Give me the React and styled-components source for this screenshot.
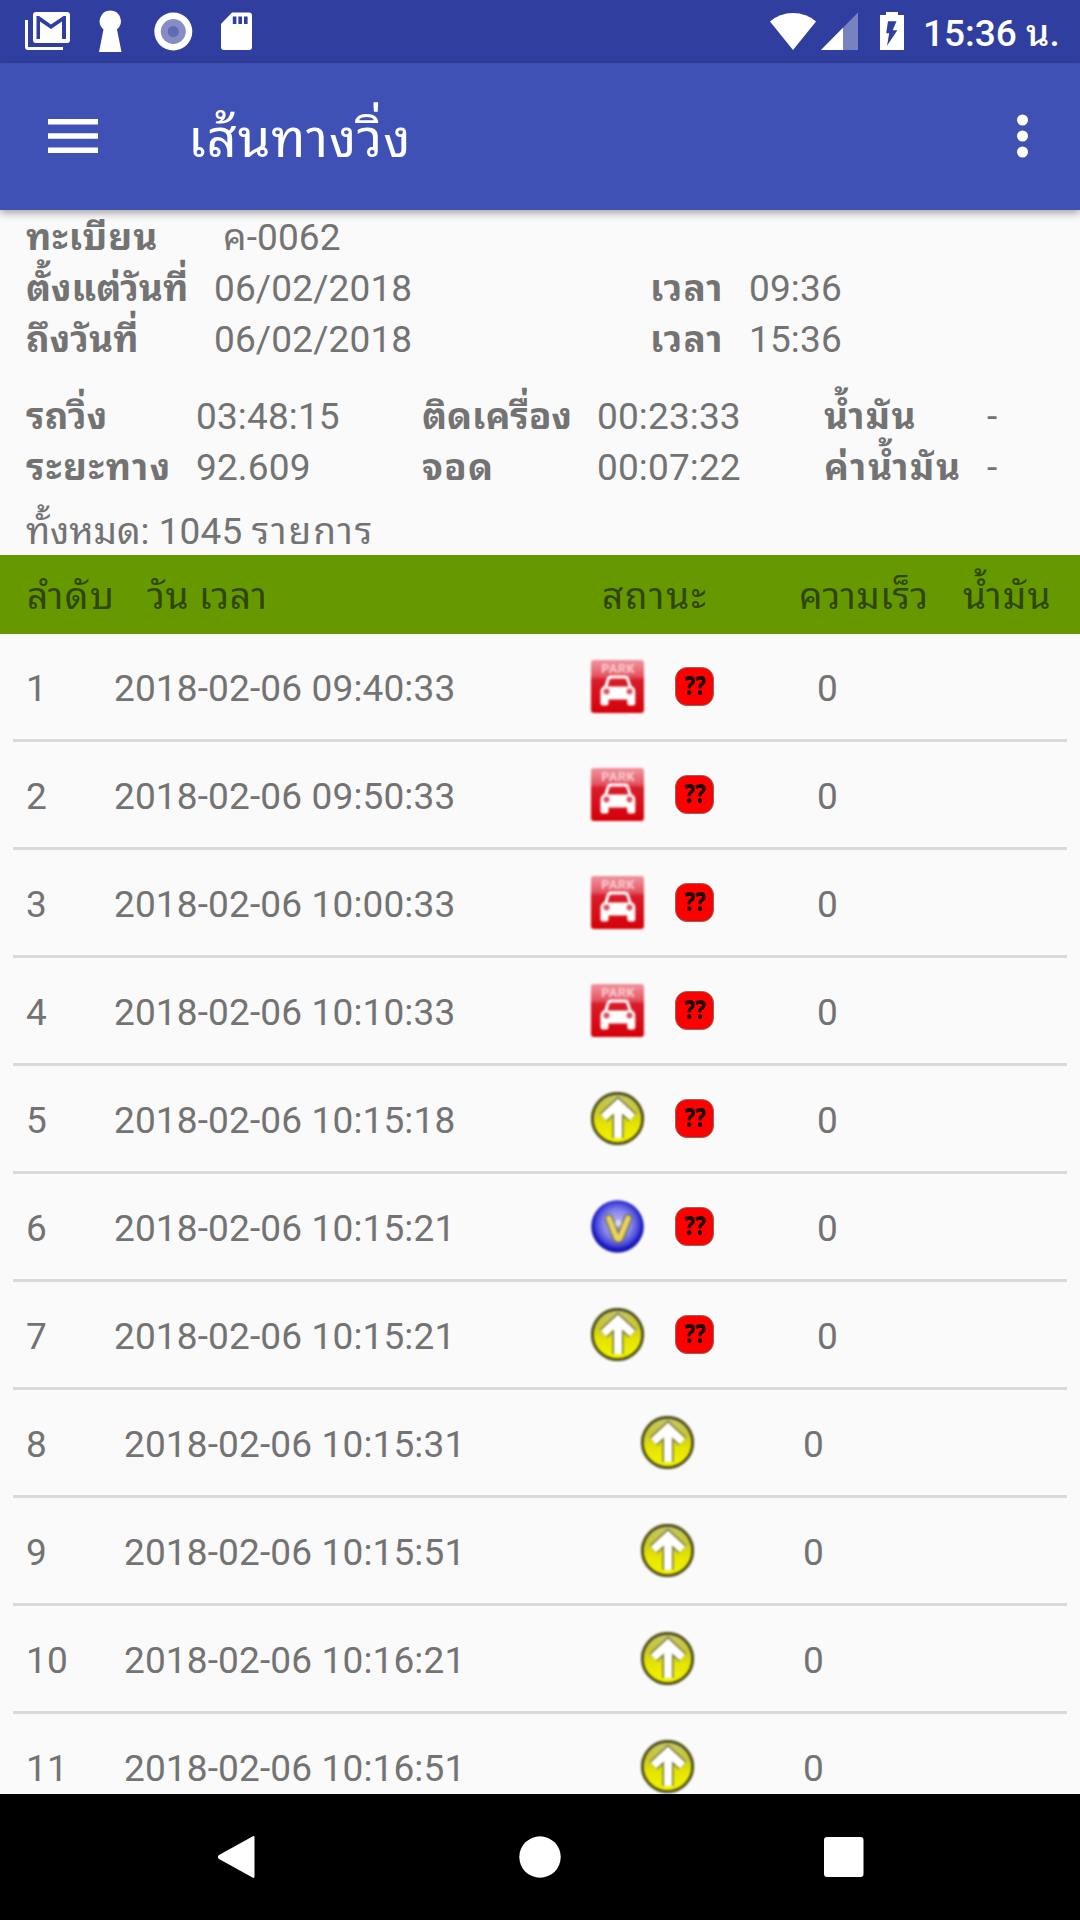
import styled, { createGlobalStyle } from 'styled-components';

const GlobalStyle = createGlobalStyle`
  * {
    box-sizing: border-box;
  }
  body {
    margin: 0;
    background-color: #fafafa;
    font-family: Roboto, 'Noto Sans Thai Looped', 'Noto Looped Thai', 'Noto Sans Thai UI', 'Noto Sans', sans-serif;
  }
  svg {
    display: block;
    flex-shrink: 0;
  }
`;

const Screen = styled.div`
  display: flex;
  flex-direction: column;
  width: 1080px;
  height: 1920px;
  overflow: hidden;
  background-color: #fafafa;
  color: #737373;
  font-size: 37px;
  letter-spacing: 0.14px;
  line-height: 51px;
  white-space: nowrap;
`;

const StatusBar = styled.div`
  display: flex;
  justify-content: space-between;
  flex-shrink: 0;
  height: 63px;
  background-color: #303f9f;
  color: #ffffff;
`;

const StatusRight = styled.div`
  display: flex;
`;

const Clock = styled.div`
  width: 157px;
  padding-top: 8px;
  font-weight: 500;
  letter-spacing: 0;
`;

const AppBar = styled.header`
  position: relative;
  display: flex;
  align-items: center;
  flex-shrink: 0;
  height: 147px;
  padding: 0 42px 1px 48px;
  background-color: #3f51b5;
  color: #ffffff;
  box-shadow: 0 3px 8px rgba(0, 0, 0, 0.36);
`;

const AppTitle = styled.h1`
  flex: 1;
  margin: 0 0 0 90px;
  padding-top: 5px;
  font-size: 52.5px;
  font-weight: 400;
  letter-spacing: 0.9px;
  line-height: 70px;
`;

const Summary = styled.section`
  flex-shrink: 0;
  height: 345px;
  padding: 2px 0 0 26px;
`;

const PeriodGrid = styled.div`
  display: grid;
  grid-template-columns: 188px 436px 99px 1fr;
`;

const TotalsGrid = styled.div`
  display: grid;
  grid-template-columns: 170px 226px 175px 227px 163px 1fr;
  margin-top: 26px;
`;

const Thai = styled.span`
  letter-spacing: ${(props) => props.$track || 0}px;
`;

const Label = styled(Thai)`
  font-weight: 700;
`;

const Value = styled.div`
  padding-left: ${(props) => props.$indent || 0}px;
  grid-column: ${(props) => (props.$wide ? 'span 3' : 'auto')};
`;

const Count = styled.div`
  margin-top: 15px;
  line-height: 47px;
`;

const TableHead = styled.div`
  display: grid;
  grid-template-columns: 120px 455px 197px 164px 1fr;
  flex-shrink: 0;
  height: 79px;
  padding: 16px 0 0 27px;
  background-color: #669900;
  color: #2f4600;
`;

const TableBody = styled.div`
  flex: 1;
  overflow: hidden;
`;

const Row = styled.div`
  display: grid;
  grid-template-columns: ${(props) =>
    props.$flagged ? '101px 477px 226px 1fr' : '111px 517px 162px 1fr'};
  align-items: center;
  height: 108px;
  margin: 0 13px;
  border-bottom: 3px solid #dadada;
`;

const Cell = styled.div`
  padding-top: 4px;
  &:first-child {
    padding-left: 13px;
  }
`;

const StatusCell = styled.div`
  display: flex;
  align-items: center;
  gap: 31px;
  height: 53px;
`;

// The markers are small bitmaps scaled up on the device, so edges stay soft
const Marker = styled.svg`
  width: 53px;
  height: 53px;
  filter: blur(0.9px);
`;

const Flag = styled.div`
  display: flex;
  justify-content: center;
  width: 39px;
  height: 39px;
  padding-left: 2px;
  border: 1.5px solid #8a6a60;
  border-radius: 12px;
  background-color: #ff0000;
  color: #180000;
  font-family: 'Noto Sans', sans-serif;
  font-size: 27px;
  font-weight: 800;
  letter-spacing: 0;
  line-height: 34px;
`;

const FlagText = styled.span`
  transform: scaleX(0.82);
`;

const NavBar = styled.nav`
  display: flex;
  align-items: center;
  justify-content: space-between;
  flex-shrink: 0;
  height: 126px;
  padding: 0 215px;
  background-color: #000000;
`;

const totals = [
  { label: 'รถวิ่ง', track: 0.2, value: '03:48:15' },
  { label: 'ติดเครื่อง', track: 0, value: '00:23:33' },
  { label: 'น้ำมัน', track: 1.3, value: '-' },
  { label: 'ระยะทาง', track: 1.45, value: '92.609' },
  { label: 'จอด', track: 1, value: '00:07:22' },
  { label: 'ค่าน้ำมัน', track: 1.6, value: '-' },
];

const columns = [
  { label: 'ลำดับ', track: 1.5 },
  { label: 'วัน เวลา', track: 0.65 },
  { label: 'สถานะ', track: 1.8 },
  { label: 'ความเร็ว', track: 0.4 },
  { label: 'น้ำมัน', track: 1.2 },
];

const records = [
  { time: '09:40:33', status: 'park', flagged: true },
  { time: '09:50:33', status: 'park', flagged: true },
  { time: '10:00:33', status: 'park', flagged: true },
  { time: '10:10:33', status: 'park', flagged: true },
  { time: '10:15:18', status: 'up', flagged: true },
  { time: '10:15:21', status: 'valid', flagged: true },
  { time: '10:15:21', status: 'up', flagged: true },
  { time: '10:15:31', status: 'up' },
  { time: '10:15:51', status: 'up' },
  { time: '10:16:21', status: 'up' },
  { time: '10:16:51', status: 'up' },
];

function NotificationIcons() {
  return (
    <svg width='270' height='63' fill='#fff'>
      {/* gmail */}
      <path d='M25 20h3v27h35v3H28q-3 0-3-3z' />
      <path
        fillRule='evenodd'
        d='M36 12h31q3 0 3 3v25q0 3-3 3H36q-3 0-3-3V15q0-3 3-3zM36.5 16v23H40V21.500l11 7.500 11-7.500V39h4V16h-2.500L51 24.500 39 16z'
      />
      {/* keyhole */}
      <path d='M110.300 10.500a10.700 10.700 0 0 1 6.700 18.900L121.500 52H99l4.500-22.600a10.700 10.700 0 0 1 6.800-18.900z' />
      {/* record */}
      <circle cx='173.300' cy='31.500' r='19' />
      <circle cx='173.300' cy='31.500' r='12.500' fill='#868dc6' />
      <circle cx='173.300' cy='31.500' r='5.600' fill='#5f6bb5' />
      {/* sd card */}
      <path
        fillRule='evenodd'
        d='M232 12.500h17q3 0 3 3V47q0 3-3 3h-25q-3 0-3-3V24zM232.800 16.500V24h3.600v-7.500zM238.400 16.500V24h3.600v-7.500zM244 16.500V24h3.600v-7.500z'
      />
    </svg>
  );
}

function SystemIcons() {
  return (
    <svg width='156' height='63' viewBox='767 0 156 63' fill='#fff'>
      <path d='M793 50L770 21.500q9.500-8.500 23-8.500t23 8.500z' />
      <path d='M858 12.500V50h-37z' opacity='0.35' />
      <path d='M843 27.700V50h-22z' />
      <path
        fillRule='evenodd'
        d='M886 12h12v3h6v35h-24V15h6zM888 21.300l-1.800 12h3L887 45.700l10.400-15.400h-4.700l3.800-9z'
      />
    </svg>
  );
}

function ParkMarker() {
  return (
    <Marker viewBox='0 0 53 53'>
      <defs>
        <linearGradient id='parkFill' x1='0' y1='0' x2='0' y2='1'>
          <stop offset='0' stopColor='#f0959e' />
          <stop offset='0.3' stopColor='#e65663' />
          <stop offset='0.38' stopColor='#d81c2a' />
          <stop offset='1' stopColor='#d60008' />
        </linearGradient>
      </defs>
      <rect width='53' height='53' rx='3' fill='url(#parkFill)' />
      <text
        x='27'
        y='13'
        textAnchor='middle'
        fontFamily='Roboto, sans-serif'
        fontSize='13'
        fontWeight='900'
        fill='#f8c4ca'
      >
        PARK
      </text>
      <path
        fill='#fff'
        fillRule='evenodd'
        d='M20 15.500h14q3 0 4 3l2.500 7.500q3.800 1.500 3.800 5.500V43q0 2.500-2.500 2.500h-3q-2.500 0-2.500-2.500v-3.500H17.500V43q0 2.500-2.500 2.500h-3q-2.500 0-2.500-2.500V31.500q0-4 3.800-5.500l2.500-7.500q1-3 4.200-3zM20.500 18.500q-1.500 0-2 1.500l-2 6.500h21L35.500 20q-.5-1.500-2-1.500z'
      />
      <circle cx='15.500' cy='31.500' r='3' fill='#dc5260' />
      <circle cx='38.500' cy='31.500' r='3' fill='#dc5260' />
    </Marker>
  );
}

function UpMarker() {
  const arrow = 'M27 46V12M12.500 25.500L27 12l14.500 13.500';

  return (
    <Marker viewBox='0 0 53 53'>
      <defs>
        <linearGradient id='upFill' x1='0' y1='0' x2='0' y2='1'>
          <stop offset='0' stopColor='#c4c470' />
          <stop offset='0.35' stopColor='#c8c82c' />
          <stop offset='0.6' stopColor='#e4e400' />
          <stop offset='1' stopColor='#f4f400' />
        </linearGradient>
      </defs>
      <circle cx='26.500' cy='26.500' r='25.200' fill='url(#upFill)' stroke='#4c4c18' strokeWidth='2.800' />
      <path d={arrow} fill='none' stroke='#74743c' strokeWidth='11' />
      <path d={arrow} fill='none' stroke='#fff' strokeWidth='8' />
    </Marker>
  );
}

function ValidMarker() {
  const letter = 'M18 18.500l7.500 19q1.800 3 3.600 0L37 18.500';

  return (
    <Marker viewBox='0 0 53 53'>
      <defs>
        <radialGradient id='validFill' cx='0.5' cy='0.46' r='0.54'>
          <stop offset='0' stopColor='#c0c0f8' />
          <stop offset='0.5' stopColor='#8484ea' />
          <stop offset='0.76' stopColor='#4444d8' />
          <stop offset='0.88' stopColor='#1616c0' />
          <stop offset='1' stopColor='#1c1ca4' />
        </radialGradient>
      </defs>
      <circle cx='26.500' cy='26.500' r='26.300' fill='url(#validFill)' />
      <path d={letter} fill='none' stroke='#757058' strokeWidth='8.600' strokeLinecap='round' />
      <path d={letter} fill='none' stroke='#e6d25c' strokeWidth='5.600' strokeLinecap='round' />
      <circle cx='27.300' cy='23' r='3.200' fill='#d4d4fa' />
    </Marker>
  );
}

const markers = { park: ParkMarker, up: UpMarker, valid: ValidMarker };

function RecordRow({ index, time, status, flagged }) {
  const StatusMarker = markers[status];

  return (
    <Row $flagged={flagged}>
      <Cell>{index}</Cell>
      <Cell>2018-02-06 {time}</Cell>
      <StatusCell>
        <StatusMarker />
        {flagged && (
          <Flag>
            <FlagText>??</FlagText>
          </Flag>
        )}
      </StatusCell>
      <Cell>0</Cell>
    </Row>
  );
}

function App() {
  return (
    <Screen>
      <GlobalStyle />
      <StatusBar>
        <NotificationIcons />
        <StatusRight>
          <SystemIcons />
          <Clock>15:36 น.</Clock>
        </StatusRight>
      </StatusBar>

      <AppBar>
        <svg width='50' height='34' fill='#fff'>
          <path d='M0 0h50v5.500H0zM0 14.200h50v5.500H0zM0 28.500h50V34H0z' />
        </svg>
        <AppTitle>เส้นทางวิ่ง</AppTitle>
        <svg width='32' height='44' fill='#fff'>
          <circle cx='16.500' cy='6' r='5.500' />
          <circle cx='16.500' cy='22' r='5.500' />
          <circle cx='16.500' cy='38' r='5.500' />
        </svg>
      </AppBar>

      <Summary>
        <PeriodGrid>
          <Label $track={1}>ทะเบียน</Label>
          <Value $wide $indent={9}>ค-0062</Value>
          <Label>ตั้งแต่วันที่</Label>
          <Value>06/02/2018</Value>
          <Label $track={1.1}>เวลา</Label>
          <Value>09:36</Value>
          <Label $track={0.1}>ถึงวันที่</Label>
          <Value>06/02/2018</Value>
          <Label $track={1.1}>เวลา</Label>
          <Value>15:36</Value>
        </PeriodGrid>
        <TotalsGrid>
          {totals.map(({ label, track, value }) => [
            <Label key={label} $track={track}>{label}</Label>,
            <Value key={`${label}-value`}>{value}</Value>,
          ])}
        </TotalsGrid>
        <Count>
          <Thai $track={-0.1}>ทั้งหมด:</Thai> 1045 <Thai $track={1.9}>รายการ</Thai>
        </Count>
      </Summary>

      <TableHead>
        {columns.map(({ label, track }) => (
          <Thai key={label} $track={track}>{label}</Thai>
        ))}
      </TableHead>
      <TableBody>
        {records.map((record, i) => (
          <RecordRow key={i} index={i + 1} {...record} />
        ))}
      </TableBody>

      <NavBar>
        <svg width='42' height='44' fill='#fff'>
          <path d='M37.500 1.500q2-1.200 2 1v39q0 2.200-2 1L4 24q-2.400-2 0-4z' />
        </svg>
        <svg width='42' height='42' fill='#fff'>
          <circle cx='21' cy='21' r='20.700' />
        </svg>
        <svg width='42' height='42' fill='#fff'>
          <rect x='1' y='1' width='39.500' height='40' rx='3' />
        </svg>
      </NavBar>
    </Screen>
  );
}

export default App;
